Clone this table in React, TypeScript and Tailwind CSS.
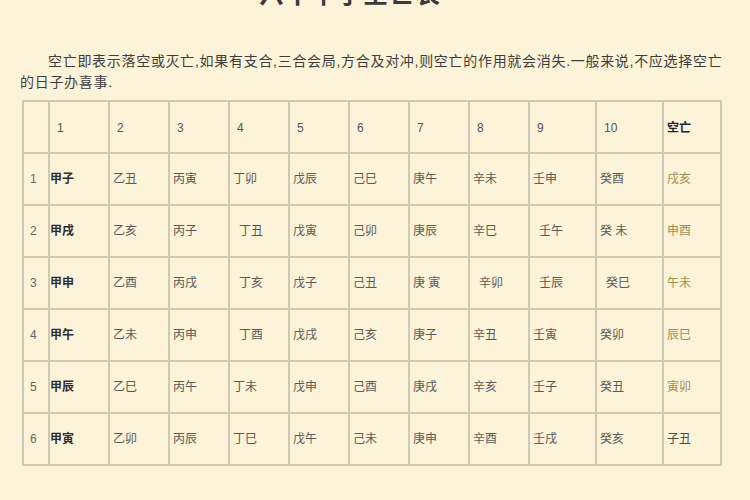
const font = { fontFamily: '"Liberation Sans", "Noto Sans CJK SC", sans-serif' };

const colWidths = [26, 60, 60, 60, 60, 60, 60, 60, 60, 67, 67, 58];

// leading \u2002 nudges a cell a few px to the right, as in the source table
const rows: string[][] = [
    ['甲子', '乙丑', '丙寅', '丁卯', '戊辰', '己巳', '庚午', '辛未', '壬申', '癸酉', '戌亥'],
    ['甲戌', '乙亥', '丙子', '\u2002丁丑', '戊寅', '己卯', '庚辰', '辛巳', '\u2002壬午', '癸 未', '申酉'],
    ['甲申', '乙酉', '丙戌', '\u2002丁亥', '戊子', '己丑', '庚 寅', '\u2002辛卯', '\u2002壬辰', '\u2002癸巳', '午未'],
    ['甲午', '乙未', '丙申', '\u2002丁酉', '戊戌', '己亥', '庚子', '辛丑', '壬寅', '癸卯', '辰巳'],
    ['甲辰', '乙巳', '丙午', '丁未', '戊申', '己酉', '庚戌', '辛亥', '壬子', '癸丑', '寅卯'],
    ['甲寅', '乙卯', '丙辰', '丁巳', '戊午', '己未', '庚申', '辛酉', '壬戌', '癸亥', '子丑'],
];

export default function App() {
    return (
        <div className="w-[750px] h-[500px] overflow-hidden bg-[#fcf3d8] text-[#444]" style={font}>
            {/* title is cut by the top edge of the shot */}
            <div className="h-[8px] overflow-hidden flex justify-center pr-[50px]">
                <div className="text-[25px] leading-[25px] -mt-[18px] font-bold text-[#3a3a3a] tracking-[1px]">
                    六十甲子空亡表
                </div>
            </div>

            <p className="mt-[43px] ml-[20px] w-[720px] text-[14px] leading-[21px] text-[#3d3d3d] indent-[28px] tracking-[0.7px] whitespace-nowrap">
                空亡即表示落空或灭亡,如果有支合,三合会局,方合及对冲,则空亡的作用就会消失.一般来说,不应选择空亡
                <br />
                的日子办喜事.
            </p>

            <table className="mt-[7px] ml-[22px] table-fixed border-collapse text-[12px]" style={{ width: 698 }}>
                <colgroup>
                    {colWidths.map((w, i) => (
                        <col key={i} style={{ width: w }} />
                    ))}
                </colgroup>
                <tbody>
                    <tr className="h-[52px]">
                        <td className="border-2 border-[#cdc9b5]" />
                        {Array.from({ length: 10 }, (_, i) => (
                            <td key={i} className="border-2 border-[#cdc9b5] pl-[7px] text-[#555] pt-[2px]">
                                {i + 1}
                            </td>
                        ))}
                        <td className="border-2 border-[#cdc9b5] pl-[3px] font-bold text-[#23233f] pt-[2px]">空亡</td>
                    </tr>
                    {rows.map((row, r) => (
                        <tr key={r} className="h-[52px]">
                            <td className="border-2 border-[#cdc9b5] pl-[6px] text-[#666]">{r + 1}</td>
                            {row.map((cell, c) => {
                                const first = c === 0;
                                const last = c === row.length - 1;
                                let tone = 'text-[#5a5a5a] pl-[3px]';
                                if (first) tone = 'text-[#2e2e2e] font-bold pl-[0px]';
                                if (last) tone = r === 5 ? 'text-[#4a4a4a] pl-[3px]' : 'text-[#a08f4e] pl-[3px]';
                                return (
                                    <td key={c} className={`border-2 border-[#cdc9b5] whitespace-pre ${tone}`}>
                                        {cell}
                                    </td>
                                );
                            })}
                        </tr>
                    ))}
                </tbody>
            </table>
        </div>
    );
}
